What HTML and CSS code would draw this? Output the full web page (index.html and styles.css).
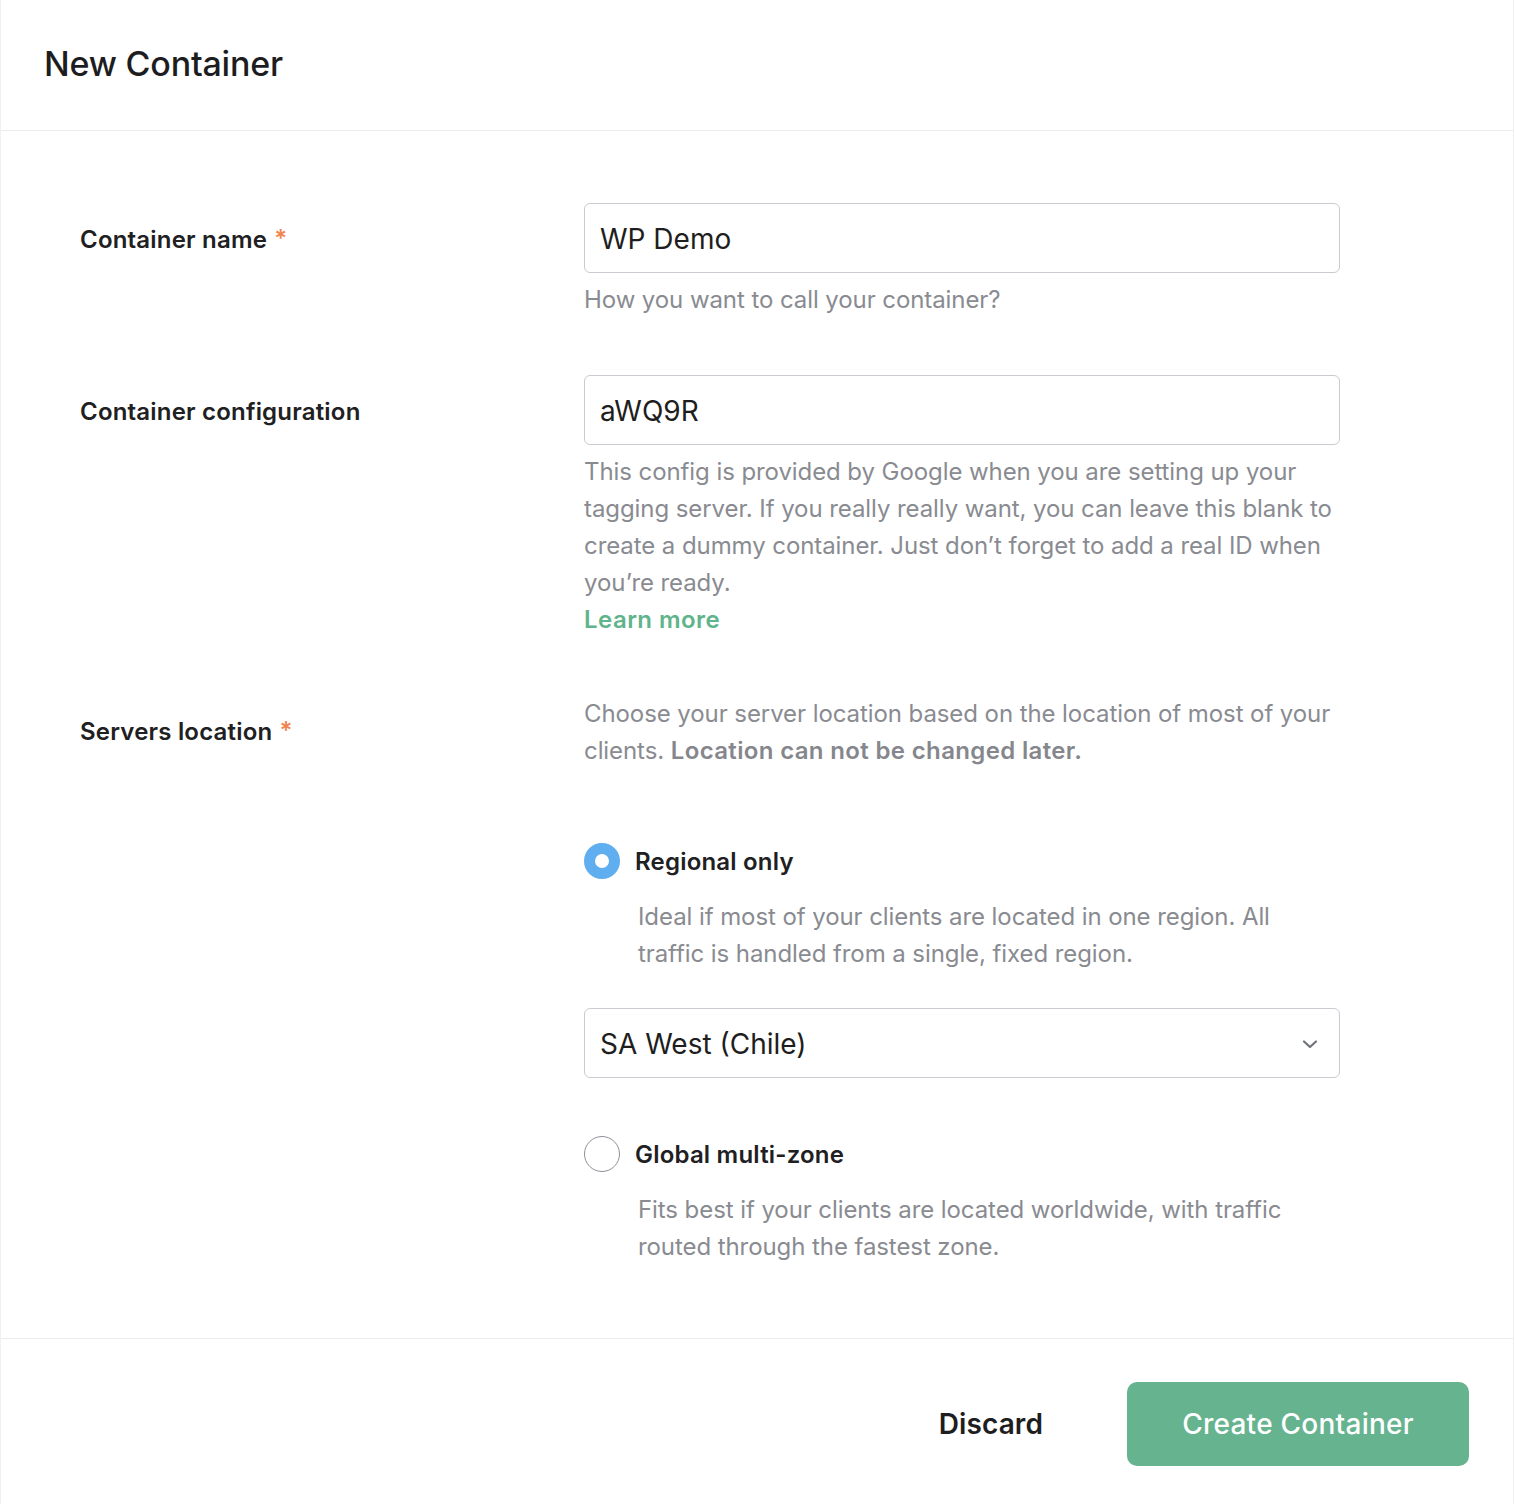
FILE: index.html
```html
<!DOCTYPE html>
<html lang="en">
<head>
<meta charset="utf-8">
<title>New Container</title>
<link rel="stylesheet" href="styles.css">
</head>
<body>
<div class="page">
  <header class="header">
    <h1 class="title">New Container</h1>
  </header>

  <main class="form">
    <div class="row">
      <div class="label">Container name <span class="req">*</span></div>
      <div class="field">
        <div class="input">WP Demo</div>
        <p class="help">How you want to call your container?</p>
      </div>
    </div>

    <div class="row">
      <div class="label">Container configuration</div>
      <div class="field">
        <div class="input">aWQ9R</div>
        <p class="help">This config is provided by Google when you are setting up your tagging server. If you really really want, you can leave this blank to create a dummy container. Just don’t forget to add a real ID when you’re ready.</p>
        <a class="link" href="#">Learn more</a>
      </div>
    </div>

    <div class="row">
      <div class="label">Servers location <span class="req">*</span></div>
      <div class="field">
        <p class="help intro">Choose your server location based on the location of most of your clients. <strong>Location can not be changed later.</strong></p>

        <div class="option">
          <div class="option-head">
            <span class="radio checked"></span>
            <span class="option-label">Regional only</span>
          </div>
          <p class="help option-desc">Ideal if most of your clients are located in one region. All traffic is handled from a single, fixed region.</p>
          <div class="input select">
            <span>SA West (Chile)</span>
            <svg class="chevron" width="18" height="12" viewBox="0 0 18 12"><path d="M3 3.5 L9 9 L15 3.5" fill="none" stroke="#70737a" stroke-width="2.2" stroke-linecap="round" stroke-linejoin="round"/></svg>
          </div>
        </div>

        <div class="option second">
          <div class="option-head">
            <span class="radio"></span>
            <span class="option-label">Global multi-zone</span>
          </div>
          <p class="help option-desc">Fits best if your clients are located worldwide, with traffic routed through the fastest zone.</p>
        </div>
      </div>
    </div>
  </main>

  <footer class="footer">
    <button class="btn-discard" type="button">Discard</button>
    <button class="btn-primary" type="button">Create Container</button>
  </footer>
</div>
</body>
</html>
```

FILE: styles.css
```css
html, body {
  margin: 0;
  padding: 0;
  background: #ffffff;
}

body {
  font-family: Inter, "Noto Sans", "Liberation Sans", sans-serif;
  color: #1f1f21;
}

.page {
  width: 1514px;
  border-left: 1px solid #eef1f1;
  border-right: 1px solid #eeeeee;
  min-height: 1504px;
  box-sizing: border-box;
}

.header {
  height: 131px;
  border-bottom: 1px solid #ececec;
  display: flex;
  align-items: center;
  padding-left: 43px;
  box-sizing: border-box;
}

.title {
  margin: 0;
  font-size: 34px;
  font-weight: 500;
  letter-spacing: -0.2px;
  color: #1d1d1f;
  position: relative;
  top: -2px;
}

.form {
  padding: 72px 0 73px 79px;
  display: flex;
  flex-direction: column;
  gap: 57px;
  border-bottom: 1px solid #ececec;
}

.row {
  display: flex;
}

.label {
  width: 504px;
  flex: none;
  height: 72px;
  display: flex;
  align-items: center;
  font-size: 24px;
  font-weight: 600;
  color: #202022;
  letter-spacing: 0.2px;
}

.req {
  color: #f08650;
  font-size: 24px;
  margin-left: 7px;
  align-self: center;
  position: relative;
  top: -1px;
}

.field {
  width: 756px;
  flex: none;
}

.input {
  height: 70px;
  box-sizing: border-box;
  border: 1px solid #c8cbd0;
  border-radius: 6px;
  padding: 2px 16px 0 15px;
  display: flex;
  align-items: center;
  font-size: 28px;
  color: #1e1e20;
}

.help {
  margin: 8px 0 0;
  font-size: 24px;
  line-height: 37px;
  color: #898b91;
  letter-spacing: -0.08px;
}

.help strong {
  font-weight: 600;
  color: #85878d;
  letter-spacing: 0.35px;
}

.intro {
  margin-top: 0;
}

.link {
  display: block;
  font-size: 24px;
  line-height: 37px;
  font-weight: 600;
  color: #5fb48b;
  text-decoration: none;
  letter-spacing: 0.45px;
}

.option {
  margin-top: 74px;
}

.option.second {
  margin-top: 58px;
}

.option-head {
  display: flex;
  align-items: center;
  gap: 15px;
  height: 36px;
}

.radio {
  width: 36px;
  height: 36px;
  box-sizing: border-box;
  border-radius: 50%;
  border: 1px solid #8d9096;
  background: #fff;
  flex: none;
}

.radio.checked {
  border: 11px solid #5eaef0;
}

.option-label {
  font-size: 24px;
  font-weight: 600;
  color: #202022;
  letter-spacing: 0.2px;
}

.option-desc {
  margin-top: 19px;
  padding-left: 54px;
}

.select {
  margin-top: 36px;
  justify-content: space-between;
  padding-right: 20px;
}

.chevron {
  display: block;
}

.footer {
  display: flex;
  justify-content: flex-end;
  align-items: center;
  padding: 43px 44px 0 0;
  gap: 44px;
}

.btn-discard {
  font-family: inherit;
  background: none;
  border: none;
  height: 84px;
  padding: 0 40px;
  font-size: 28px;
  font-weight: 600;
  color: #1e1e20;
  letter-spacing: 0.1px;
  cursor: pointer;
}

.btn-primary {
  font-family: inherit;
  width: 342px;
  height: 84px;
  border: none;
  border-radius: 10px;
  background: #66b38f;
  color: #ffffff;
  font-size: 28px;
  font-weight: 500;
  letter-spacing: 0.25px;
  cursor: pointer;
}
```
